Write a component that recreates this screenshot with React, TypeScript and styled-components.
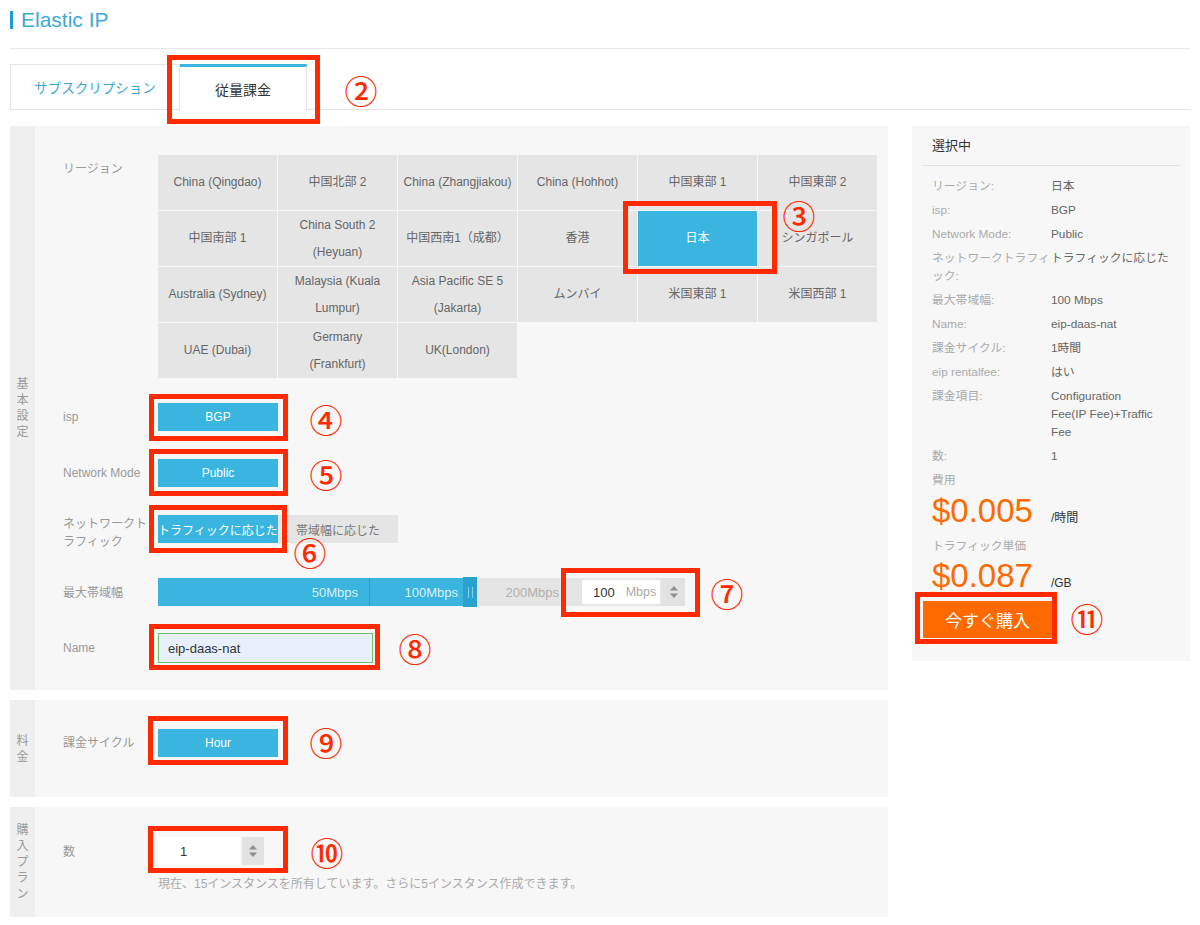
import React from 'react';
import styled, { createGlobalStyle } from 'styled-components';

const BLUE = '#39b5df';
const RED = '#ff2a00';
const ORANGE = '#ff6a00';

const GlobalStyle = createGlobalStyle`
  * { box-sizing: border-box; }
  html, body { margin: 0; padding: 0; background: #fff; }
  body {
    font-family: "Liberation Sans", "Noto Sans CJK JP", sans-serif;
    color: #333;
  }
`;

const Page = styled.div`
  width: 1200px;
  padding: 0 10px;
`;

const Header = styled.header`
  height: 49px;
  border-bottom: 1px solid #e8e8e8;
  display: flex;
  align-items: flex-start;
  padding-top: 11px;
`;

const TitleBar = styled.span`
  width: 3px;
  height: 18px;
  background: #1f9bd1;
  flex: none;
`;

const Title = styled.h1`
  margin: 0 0 0 8px;
  font-size: 21px;
  line-height: 18px;
  font-weight: normal;
  color: #3da9d8;
`;

const TabBar = styled.nav`
  margin-top: 15px;
  height: 46px;
  display: flex;
  align-items: flex-start;
  border-bottom: 1px solid #e2e2e2;
`;

const Tab = styled.div<{ $active?: boolean }>`
  width: ${p => (p.$active ? 127 : 170)}px;
  height: ${p => (p.$active ? 46 : 45)}px;
  background: #fff;
  display: flex;
  align-items: center;
  justify-content: center;
  border-top: ${p => (p.$active ? `3px solid ${BLUE}` : '1px solid #e2e2e2')};
  border-left: ${p => (p.$active ? 'none' : '1px solid #e2e2e2')};
  border-right: 1px solid #e2e2e2;
  font-size: ${p => (p.$active ? 14 : 13.5)}px;
  color: ${p => (p.$active ? '#333' : '#39a6d6')};
  padding-bottom: ${p => (p.$active ? 0 : 1)}px;
`;

const Main = styled.main`
  margin-top: 16px;
  display: flex;
  align-items: flex-start;
  gap: 24px;
`;

const LeftColumn = styled.div`
  width: 878px;
  flex: none;
  display: flex;
  flex-direction: column;
  gap: 10px;
`;

const Section = styled.section`
  display: flex;
  background: #f7f7f7;
`;

const SectionSide = styled.div`
  width: 25px;
  flex: none;
  background: #efefef;
  display: flex;
  align-items: center;
  justify-content: center;
`;

const SideText = styled.span`
  width: 12px;
  font-size: 12px;
  line-height: 16px;
  color: #9a9a9a;
  text-align: center;
  word-break: break-all;
`;

const SectionBody = styled.div<{ $pt: number; $pb: number }>`
  flex: 1;
  padding: ${p => p.$pt}px 0 ${p => p.$pb}px 28px;
  display: flex;
  flex-direction: column;
`;

const Row = styled.div<{ $mt?: number }>`
  display: flex;
  align-items: flex-start;
  margin-top: ${p => p.$mt ?? 0}px;
`;

const Label = styled.div<{ $pt?: number; $nowrap?: boolean }>`
  width: 95px;
  flex: none;
  padding-top: ${p => p.$pt ?? 5}px;
  font-size: 12px;
  line-height: 18px;
  color: #999;
  white-space: ${p => (p.$nowrap ? 'nowrap' : 'pre-line')};
`;

const RegionGrid = styled.div`
  display: grid;
  grid-template-columns: repeat(6, 119px);
  grid-auto-rows: 55px;
  gap: 1px;
`;

const RegionCell = styled.div<{ $selected?: boolean }>`
  position: ${p => (p.$selected ? 'relative' : 'static')};
  display: flex;
  align-items: center;
  justify-content: center;
  text-align: center;
  white-space: pre-line;
  font-size: 12px;
  line-height: 27px;
  background: ${p => (p.$selected ? BLUE : '#e5e5e5')};
  color: ${p => (p.$selected ? '#fff' : '#666')};
`;

const OptionGroup = styled.div`
  display: flex;
`;

const Option = styled.button<{ $selected?: boolean }>`
  width: 120px;
  height: 28px;
  margin: 0;
  padding: 0;
  border: 0;
  font-family: inherit;
  font-size: 12px;
  white-space: nowrap;
  background: ${p => (p.$selected ? BLUE : '#e5e5e5')};
  color: ${p => (p.$selected ? '#fff' : '#777')};
`;

const Marked = styled.div`
  position: relative;
  display: flex;
  flex: none;
  width: fit-content;
`;

const Frame = styled.span<{ $t: number; $r: number; $b: number; $l: number }>`
  position: absolute;
  top: ${p => p.$t}px;
  right: ${p => p.$r}px;
  bottom: ${p => p.$b}px;
  left: ${p => p.$l}px;
  border: 5px solid ${RED};
  pointer-events: none;
`;

const Callout = styled.span<{ $x: number; $y: number }>`
  position: absolute;
  left: ${p => p.$x}px;
  top: ${p => p.$y}px;
  transform: translate(-50%, -50%);
  font-family: "Noto Sans CJK JP", sans-serif;
  font-size: 33px;
  font-weight: 500;
  line-height: 1;
  color: ${RED};
  white-space: nowrap;
  pointer-events: none;
`;

const Slider = styled.div`
  display: flex;
  height: 28px;
`;

const Segment = styled.div<{ $w: number; $on?: boolean; $pr: number; $divider?: boolean }>`
  width: ${p => p.$w}px;
  flex: none;
  display: flex;
  align-items: center;
  justify-content: flex-end;
  padding-right: ${p => p.$pr}px;
  font-size: 13px;
  background: ${p => (p.$on ? BLUE : '#e5e5e5')};
  color: ${p => (p.$on ? 'rgba(255,255,255,0.82)' : '#b0b0b0')};
  border-right: ${p => (p.$divider ? '1px solid #2a9dcb' : 'none')};
`;

const Handle = styled.div`
  width: 14px;
  height: 30px;
  margin-top: -1px;
  flex: none;
  background: #2aa2d0;
  display: flex;
  align-items: center;
  justify-content: center;
  gap: 3px;
`;

const Grip = styled.span`
  width: 1px;
  height: 11px;
  background: #7fcfeb;
`;

const UnitBox = styled.div`
  display: flex;
  height: 28px;
  background: #e5e5e5;
`;

const UnitField = styled.div`
  width: 78px;
  margin: 2px 0;
  background: #fff;
  display: flex;
  align-items: center;
  padding-left: 11px;
  gap: 11px;
`;

const UnitValue = styled.span`
  font-size: 13px;
  color: #333;
`;

const UnitName = styled.span`
  font-size: 12.5px;
  color: #aaa;
`;

const Spinner = styled.div<{ $ml: number }>`
  width: 22px;
  margin-left: ${p => p.$ml}px;
  background: #e2e2e2;
  display: flex;
  align-items: center;
  justify-content: center;
`;

const TextField = styled.input`
  width: 215px;
  height: 30px;
  margin: 0;
  padding: 0 0 0 9px;
  border: 1px solid #6abf69;
  background: #e8f0fe;
  font-family: inherit;
  font-size: 13px;
  color: #333;
  outline: none;
`;

const NumberGroup = styled.div`
  display: flex;
  height: 28px;
  gap: 2px;
`;

const NumberField = styled.input`
  width: 82px;
  height: 28px;
  margin: 0;
  padding: 0 0 0 22px;
  border: 0;
  background: #fff;
  font-family: inherit;
  font-size: 13px;
  color: #333;
  outline: none;
`;

const HelpText = styled.div`
  margin: 11px 0 0 95px;
  font-size: 12px;
  line-height: 16px;
  color: #aaa;
`;

const Summary = styled.aside`
  width: 278px;
  flex: none;
  background: #f7f7f7;
  padding: 0 10px 23px;
`;

const SummaryHead = styled.div`
  height: 40px;
  padding: 12px 10px 0;
  border-bottom: 1px solid #e3e3e3;
  font-size: 13px;
  line-height: 16px;
  color: #333;
`;

const InfoList = styled.dl`
  margin: 0;
  padding: 11px 10px 0;
  display: flex;
  flex-direction: column;
  gap: 6px;
`;

const InfoRow = styled.div`
  display: flex;
  font-size: 11.8px;
  line-height: 18px;
`;

const InfoKey = styled.dt`
  width: 119px;
  flex: none;
  margin: 0;
  color: #aaa;
  white-space: pre-line;
`;

const InfoValue = styled.dd`
  margin: 0;
  color: #666;
  white-space: pre-line;
`;

const PriceLabel = styled.div<{ $mt: number }>`
  margin-top: ${p => p.$mt}px;
  padding-left: 10px;
  font-size: 11.8px;
  line-height: 18px;
  color: #aaa;
`;

const PriceRow = styled.div<{ $mt: number }>`
  margin-top: ${p => p.$mt}px;
  padding-left: 10px;
  display: flex;
  align-items: baseline;
  gap: 18px;
`;

const Price = styled.span`
  font-size: 33px;
  line-height: 33px;
  color: ${ORANGE};
`;

const PriceUnit = styled.span`
  font-size: 12px;
  line-height: 1;
  color: #333;
`;

const BuyArea = styled.div`
  margin-top: 9px;
  padding-left: 1px;
`;

const BuyButton = styled.button`
  width: 129px;
  height: 37px;
  margin: 0;
  padding: 0;
  border: 0;
  background: ${ORANGE};
  color: #fff;
  font-family: inherit;
  font-size: 17px;
`;

const SpinIcon = () => (
  <svg width="10" height="16" viewBox="0 0 10 16" aria-hidden="true">
    <path d="M1 6.5 L5 2 L9 6.5 Z" fill="#8e8e8e" />
    <path d="M1 9.5 L5 14 L9 9.5 Z" fill="#8e8e8e" />
  </svg>
);

const regions = [
  'China (Qingdao)', '中国北部 2', 'China (Zhangjiakou)', 'China (Hohhot)', '中国東部 1', '中国東部 2',
  '中国南部 1', 'China South 2\n(Heyuan)', '中国西南1（成都）', '香港', '日本', 'シンガポール',
  'Australia (Sydney)', 'Malaysia (Kuala\nLumpur)', 'Asia Pacific SE 5\n(Jakarta)', 'ムンバイ', '米国東部 1', '米国西部 1',
  'UAE (Dubai)', 'Germany\n(Frankfurt)', 'UK(London)',
];

const summary: [string, string][] = [
  ['リージョン:', '日本'],
  ['isp:', 'BGP'],
  ['Network Mode:', 'Public'],
  ['ネットワークトラフィ\nック:', 'トラフィックに応じた'],
  ['最大帯域幅:', '100 Mbps'],
  ['Name:', 'eip-daas-nat'],
  ['課金サイクル:', '1時間'],
  ['eip rentalfee:', 'はい'],
  ['課金項目:', 'Configuration\nFee(IP Fee)+Traffic\nFee'],
  ['数:', '1'],
];

export default function App() {
  return (
    <Page>
      <GlobalStyle />
      <Header>
        <TitleBar />
        <Title>Elastic IP</Title>
      </Header>

      <TabBar>
        <Tab>サブスクリプション</Tab>
        <Marked>
          <Tab $active>従量課金</Tab>
          <Frame $t={-9} $r={-13} $b={-14} $l={-13} />
          <Callout $x={181} $y={26}>②</Callout>
        </Marked>
      </TabBar>

      <Main>
        <LeftColumn>
          <Section>
            <SectionSide><SideText>基本設定</SideText></SectionSide>
            <SectionBody $pt={29} $pb={27}>
              <Row>
                <Label>リージョン</Label>
                <RegionGrid>
                  {regions.map(r =>
                    r === '日本' ? (
                      <RegionCell key={r} $selected>
                        {r}
                        <Frame $t={-10} $r={-20} $b={-8} $l={-15} />
                        <Callout $x={161} $y={4}>③</Callout>
                      </RegionCell>
                    ) : (
                      <RegionCell key={r}>{r}</RegionCell>
                    )
                  )}
                </RegionGrid>
              </Row>

              <Row $mt={25}>
                <Label>isp</Label>
                <Marked>
                  <Option $selected>BGP</Option>
                  <Frame $t={-9} $r={-10} $b={-10} $l={-9} />
                  <Callout $x={168} $y={16}>④</Callout>
                </Marked>
              </Row>

              <Row $mt={28}>
                <Label $nowrap>Network Mode</Label>
                <Marked>
                  <Option $selected>Public</Option>
                  <Frame $t={-10} $r={-10} $b={-9} $l={-9} />
                  <Callout $x={168} $y={15}>⑤</Callout>
                </Marked>
              </Row>

              <Row $mt={28}>
                <Label $pt={0}>{'ネットワークト\nラフィック'}</Label>
                <OptionGroup>
                  <Marked>
                    <Option $selected>トラフィックに応じた</Option>
                    <Frame $t={-10} $r={-9} $b={-10} $l={-9} />
                    <Callout $x={152} $y={37}>⑥</Callout>
                  </Marked>
                  <Option>帯域幅に応じた</Option>
                </OptionGroup>
              </Row>

              <Row $mt={27}>
                <Label $pt={6}>最大帯域幅</Label>
                <Slider>
                  <Segment $w={212} $on $pr={11} $divider>50Mbps</Segment>
                  <Segment $w={93} $on $pr={5}>100Mbps</Segment>
                  <Handle><Grip /><Grip /></Handle>
                  <Segment $w={105} $pr={23}>200Mbps</Segment>
                </Slider>
                <Marked>
                  <UnitBox>
                    <UnitField>
                      <UnitValue>100</UnitValue>
                      <UnitName>Mbps</UnitName>
                    </UnitField>
                    <Spinner $ml={3}><SpinIcon /></Spinner>
                  </UnitBox>
                  <Frame $t={-10} $r={-15} $b={-11} $l={-21} />
                  <Callout $x={145} $y={15}>⑦</Callout>
                </Marked>
              </Row>

              <Row $mt={27}>
                <Label $pt={6}>Name</Label>
                <Marked>
                  <TextField readOnly value="eip-daas-nat" />
                  <Frame $t={-9} $r={-7} $b={-7} $l={-9} />
                  <Callout $x={257} $y={15}>⑧</Callout>
                </Marked>
              </Row>
            </SectionBody>
          </Section>

          <Section>
            <SectionSide><SideText>料金</SideText></SectionSide>
            <SectionBody $pt={29} $pb={40}>
              <Row>
                <Label>課金サイクル</Label>
                <Marked>
                  <Option $selected>Hour</Option>
                  <Frame $t={-13} $r={-10} $b={-8} $l={-10} />
                  <Callout $x={168} $y={13}>⑨</Callout>
                </Marked>
              </Row>
            </SectionBody>
          </Section>

          <Section>
            <SectionSide><SideText>購入プラン</SideText></SectionSide>
            <SectionBody $pt={30} $pb={25}>
              <Row>
                <Label $pt={6}>数</Label>
                <Marked>
                  <NumberGroup>
                    <NumberField readOnly value="1" />
                    <Spinner $ml={0}><SpinIcon /></Spinner>
                  </NumberGroup>
                  <Frame $t={-11} $r={-24} $b={-8} $l={-10} />
                  <Callout $x={169} $y={15}>⑩</Callout>
                </Marked>
              </Row>
              <HelpText>現在、15インスタンスを所有しています。さらに5インスタンス作成できます。</HelpText>
            </SectionBody>
          </Section>
        </LeftColumn>

        <Summary>
          <SummaryHead>選択中</SummaryHead>
          <InfoList>
            {summary.map(([k, v]) => (
              <InfoRow key={k}>
                <InfoKey>{k}</InfoKey>
                <InfoValue>{v}</InfoValue>
              </InfoRow>
            ))}
          </InfoList>
          <PriceLabel $mt={6}>費用</PriceLabel>
          <PriceRow $mt={5}>
            <Price>$0.005</Price>
            <PriceUnit>/時間</PriceUnit>
          </PriceRow>
          <PriceLabel $mt={10}>トラフィック単価</PriceLabel>
          <PriceRow $mt={4}>
            <Price>$0.087</Price>
            <PriceUnit>/GB</PriceUnit>
          </PriceRow>
          <BuyArea>
            <Marked>
              <BuyButton>今すぐ購入</BuyButton>
              <Frame $t={-9} $r={-5} $b={-6} $l={-8} />
              <Callout $x={164} $y={17}>⑪</Callout>
            </Marked>
          </BuyArea>
        </Summary>
      </Main>
    </Page>
  );
}
